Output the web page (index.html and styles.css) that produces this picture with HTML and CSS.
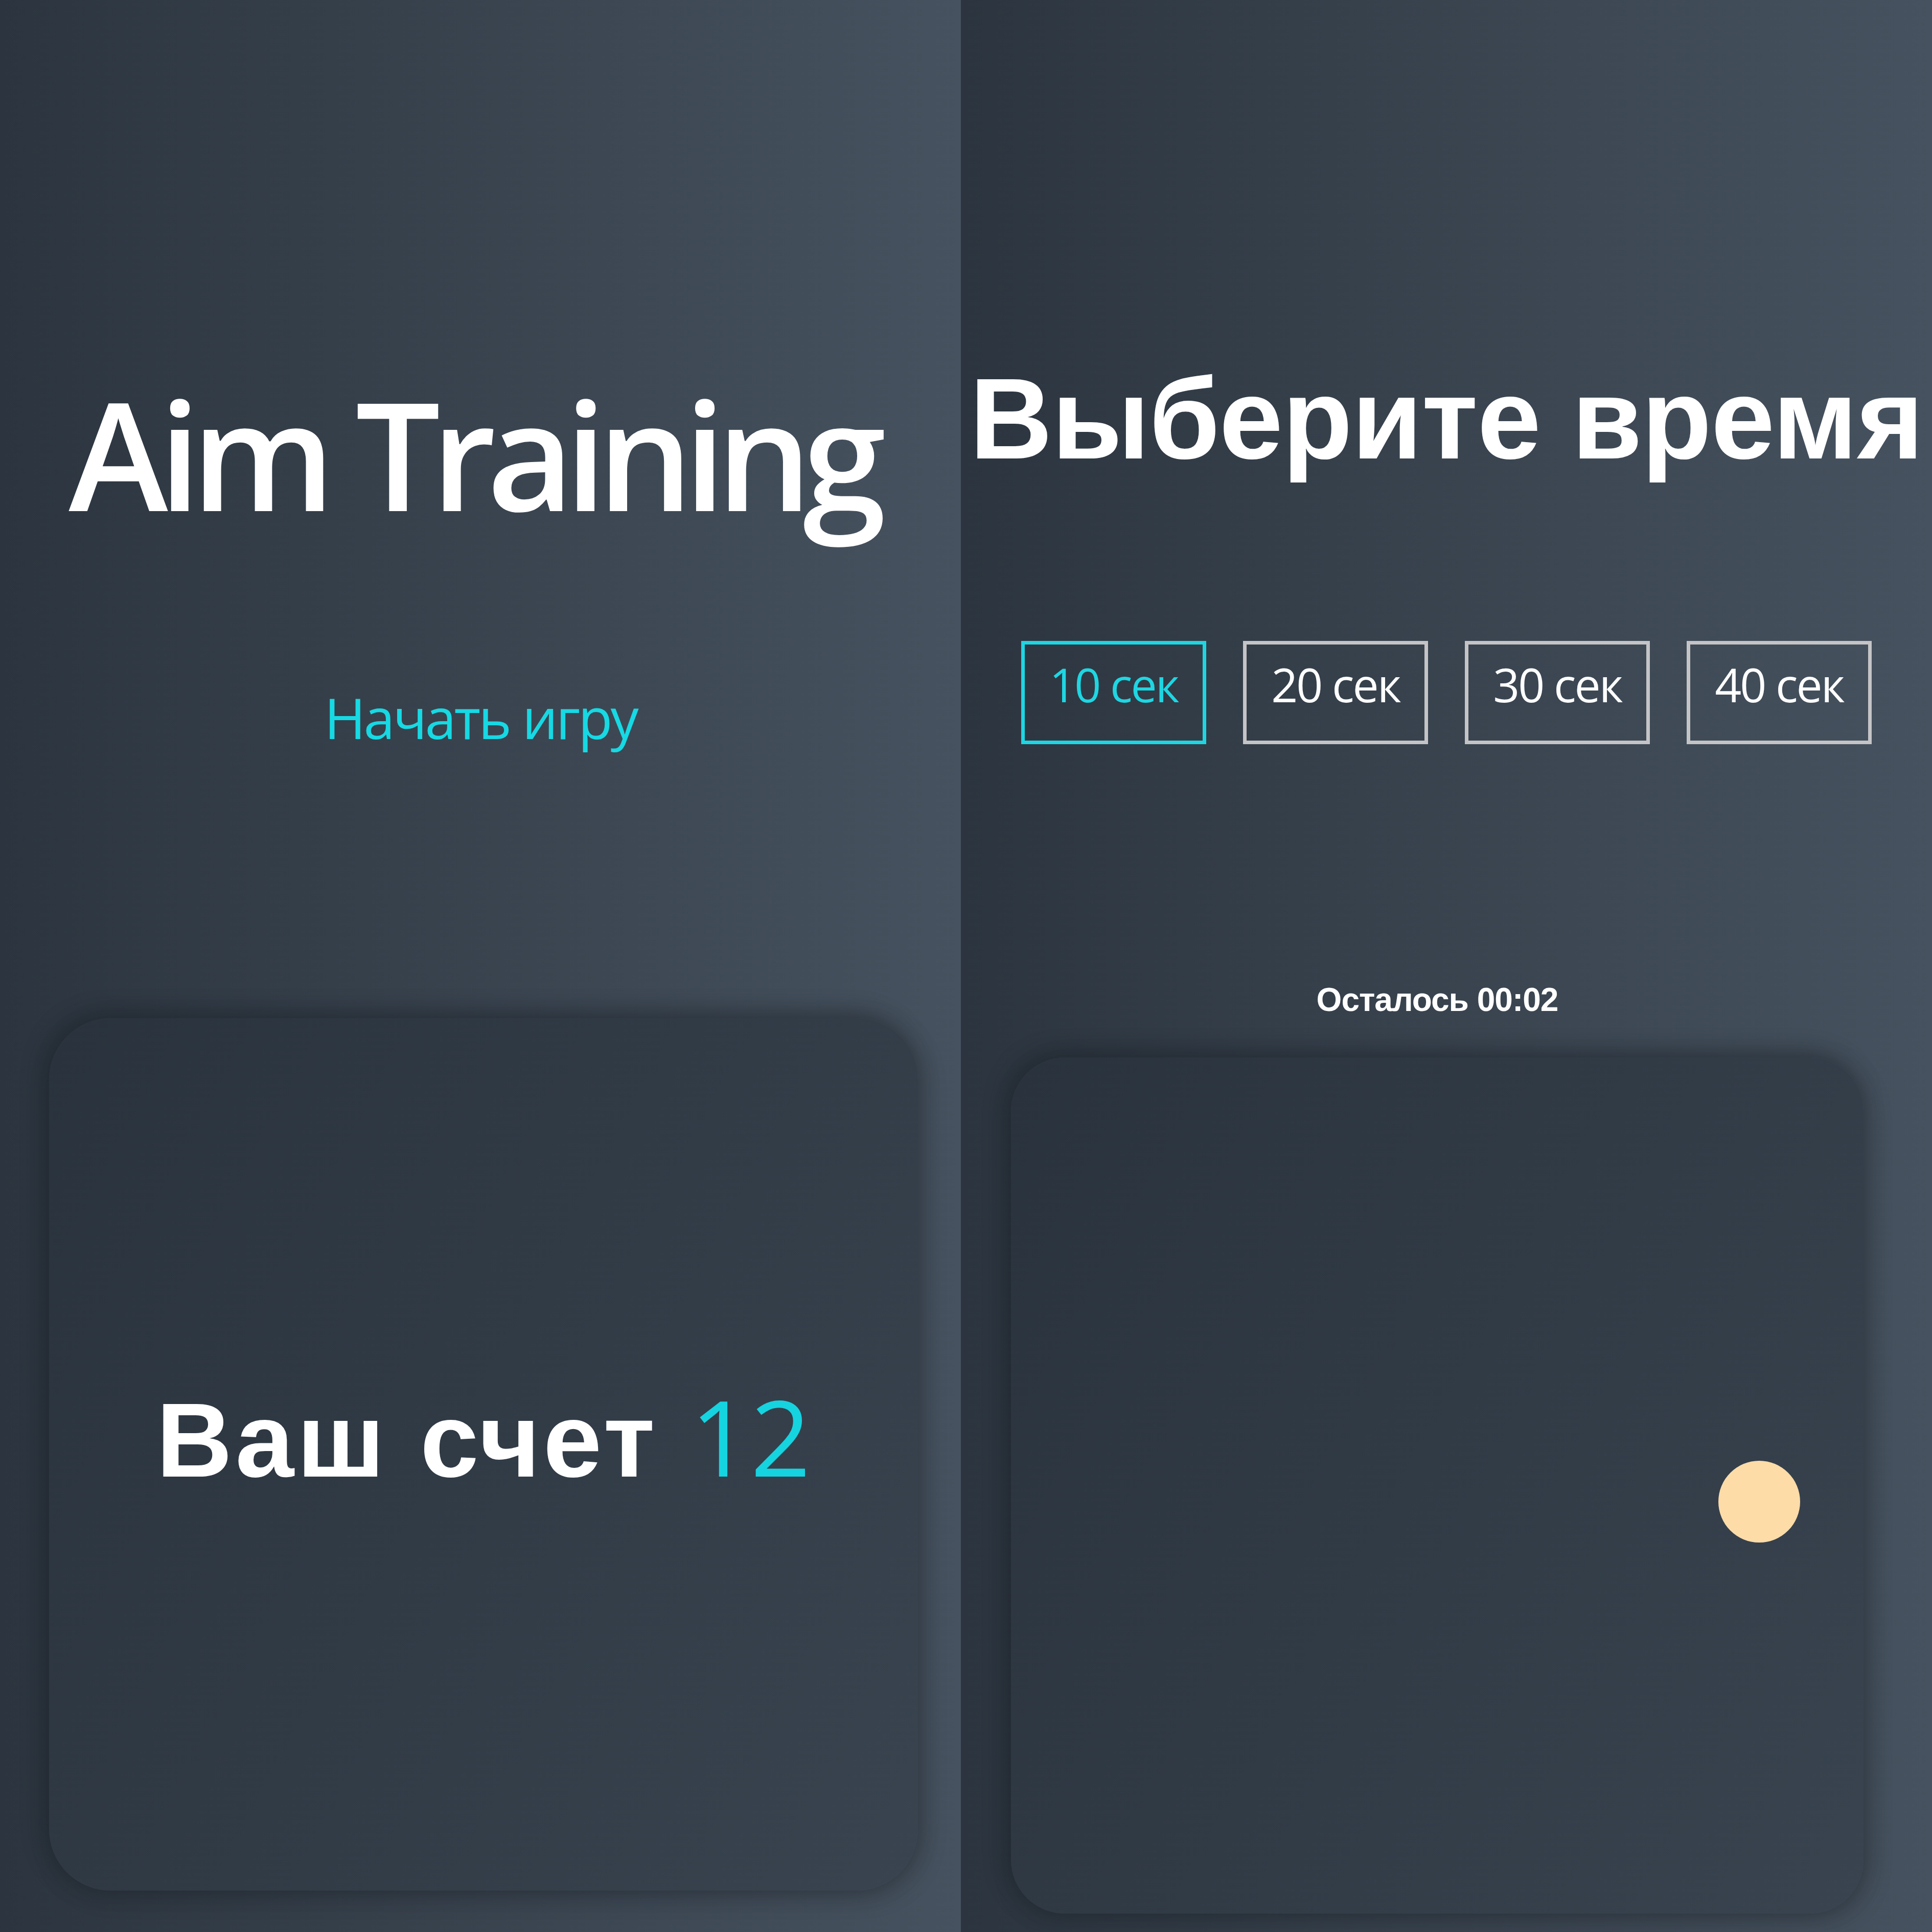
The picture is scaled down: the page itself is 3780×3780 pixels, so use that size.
FILE: index.html
```html
<!DOCTYPE html>
<html lang="ru">
<head>
<meta charset="utf-8">
<title>Aim Training</title>
<link rel="stylesheet" href="styles.css">
</head>
<body>
<div class="grid">
  <section class="screen screen-start">
    <h1 class="title">Aim Training</h1>
    <a href="#" class="start">Начать игру</a>
  </section>

  <section class="screen screen-time">
    <h1 class="heading">Выберите время</h1>
    <ul class="time-list">
      <li><button class="time-btn active">10 сек</button></li>
      <li><button class="time-btn">20 сек</button></li>
      <li><button class="time-btn">30 сек</button></li>
      <li><button class="time-btn">40 сек</button></li>
    </ul>
  </section>

  <section class="screen screen-score">
    <div class="board board-score">
      <h1 class="score">Ваш счет <span class="primary">12</span></h1>
    </div>
  </section>

  <section class="screen screen-game">
    <h3 class="timer">Осталось <span>00:02</span></h3>
    <div class="board board-game">
      <div class="circle" style="left:1384px; top:789px; width:160px; height:160px;"></div>
    </div>
  </section>
</div>
</body>
</html>
```

FILE: styles.css
```css
* {
  box-sizing: border-box;
}

html, body {
  margin: 0;
  padding: 0;
}

body {
  width: 3780px;
  height: 3780px;
  background: #2f3843;
  color: #fff;
  font-family: "Open Sans", sans-serif;
  overflow: hidden;
}

.grid {
  display: grid;
  grid-template-columns: 1880px 1900px;
  grid-template-rows: 1898px 1882px;
  width: 3780px;
  height: 3780px;
}

.screen {
  display: flex;
  flex-direction: column;
  align-items: center;
  background: linear-gradient(90deg, #2c353f 0%, #46525f 100%);
  overflow: hidden;
}

/* start screen */
.screen-start {
  padding-top: 739px;
}

.title {
  margin: 0 30px 0 0;
  font-family: "Open Sans", sans-serif;
  font-weight: 600;
  font-size: 294px;
  line-height: 294px;
  letter-spacing: -18px;
  white-space: nowrap;
}

.start {
  margin-top: 315px;
  font-family: "Open Sans", sans-serif;
  font-size: 110px;
  line-height: 110px;
  letter-spacing: -4px;
  color: #16d9e3;
  text-decoration: none;
  white-space: nowrap;
}

/* time select screen */
.screen-time {
  padding-top: 707px;
}

.heading {
  margin: 0;
  font-family: "Liberation Sans", Arial, sans-serif;
  font-weight: 700;
  font-size: 224px;
  line-height: 224px;
  letter-spacing: -1px;
  white-space: nowrap;
}

.time-list {
  display: flex;
  gap: 72px;
  list-style: none;
  margin: 323px 0 0;
  padding: 0;
}

.time-btn {
  display: block;
  width: 362px;
  height: 202px;
  padding: 0 0 32px;
  background: transparent;
  border: 7px solid #c4c4c6;
  color: #fff;
  font-family: "Open Sans", sans-serif;
  font-size: 91px;
  line-height: 91px;
  letter-spacing: -3px;
  text-align: center;
  white-space: nowrap;
}

.time-btn.active {
  border-color: #1ed6e2;
  color: #1ed6e2;
}

/* boards */
.board {
  position: relative;
  border-radius: 120px;
  background: linear-gradient(118.38deg, #29323c -4.6%, #485563 200.44%);
  box-shadow: -8px -8px 45px rgba(22, 27, 33, 0.45), 10px 10px 45px rgba(22, 27, 33, 0.25);
}

/* score screen */
.screen-score {
  align-items: flex-start;
  padding: 94px 0 0 96px;
}

.board-score {
  width: 1700px;
  height: 1707px;
  display: flex;
  justify-content: center;
  padding-top: 714px;
}

.score {
  margin: 0;
  font-family: "Liberation Sans", Arial, sans-serif;
  font-weight: 700;
  font-size: 206px;
  line-height: 206px;
  letter-spacing: 6px;
  white-space: nowrap;
}

.primary {
  font-family: "Open Sans", sans-serif;
  font-weight: 500;
  letter-spacing: 0;
  color: #16d3e0;
}

/* game screen */
.screen-game {
  padding: 26px 36px 0 0;
}

.timer {
  margin: 0;
  font-family: "Liberation Sans", Arial, sans-serif;
  font-weight: 700;
  font-size: 64px;
  line-height: 64px;
  letter-spacing: -1px;
  white-space: nowrap;
}

.board-game {
  width: 1668px;
  height: 1675px;
  margin-top: 81px;
  border-radius: 105px;
}

.circle {
  position: absolute;
  border-radius: 50%;
  background: #fedca8;
}
```
